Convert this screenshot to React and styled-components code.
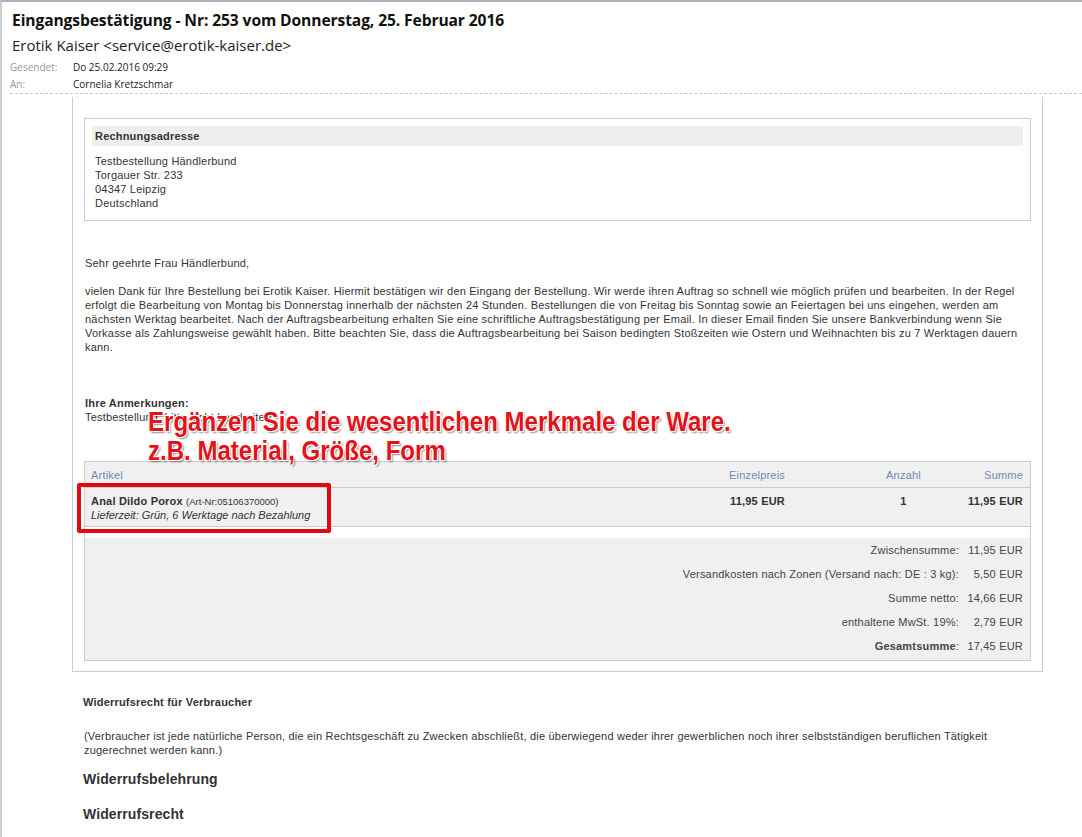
import React from "react";
import styled, { createGlobalStyle } from "styled-components";

const GlobalStyle = createGlobalStyle`
  html, body {
    margin: 0;
    padding: 0;
    background: #ffffff;
  }
  body {
    font-family: "Liberation Sans", Arial, sans-serif;
    color: #333333;
  }
`;

const Window = styled.div`
  width: 1082px;
  height: 837px;
  box-sizing: border-box;
  border-top: 2px solid #a9b1ba;
  border-left: 2px solid #c9ccd0;
  overflow: hidden;
  background: #ffffff;
`;

const Header = styled.header`
  margin-left: 8px;
  padding: 8px 0 1px 2px;
  border-bottom: 1px dashed #c8c8c8;
  font-family: "Open Sans", "Noto Sans", sans-serif;
`;

const Subject = styled.h1`
  margin: 0;
  font-size: 15.6px;
  line-height: 20px;
  font-weight: 700;
  color: #111111;
  letter-spacing: -0.1px;
`;

const From = styled.div`
  margin-top: 5px;
  font-size: 15px;
  line-height: 20px;
  color: #222222;
`;

const MetaList = styled.div`
  margin: 3px 0 0 -2px;
  display: grid;
  grid-template-columns: 63px 1fr;
  grid-auto-rows: 17px;
  align-items: center;
  font-size: 10px;
`;

const MetaLabel = styled.span`
  color: #9a9a9a;
`;

const MetaValue = styled.span`
  color: #1a1a1a;
`;

const Body = styled.div`
  padding: 3px 0 0 70px;
  font-size: 11px;
  letter-spacing: 0.2px;
  color: #333333;
`;

const Frame = styled.div`
  position: relative;
  width: 971px;
  box-sizing: border-box;
  padding: 21px 11px 10px 11px;
  border: 1px solid #cccccc;
  border-top: none;
`;

const AddressBox = styled.section`
  border: 1px solid #cccccc;
  padding: 7px 7px 10px 7px;
`;

const BoxTitle = styled.div`
  background: #eeeeee;
  height: 20px;
  line-height: 20px;
  padding-left: 3px;
  font-weight: 700;
`;

const AddressLines = styled.div`
  margin-top: 8px;
  padding-left: 3px;
  line-height: 14px;
`;

const Text = styled.p`
  margin: ${(p) => p.$top || 0}px 0 0 1px;
  line-height: 14px;
  white-space: nowrap;
`;

const Strong = styled.span`
  font-weight: 700;
`;

const OrderTable = styled.div`
  margin-top: 37px;
  border: 1px solid #cccccc;
`;

const Row = styled.div`
  display: grid;
  grid-template-columns: 1fr 187px 110px 71px;
  box-sizing: border-box;
  background: #f0f0f0;
  border-bottom: ${(p) => (p.$line ? "1px solid #cccccc" : "none")};
  height: ${(p) => p.$h}px;
  align-items: ${(p) => (p.$head ? "center" : "start")};
`;

const Cell = styled.div`
  padding: ${(p) => (p.$head ? "0" : "6px")} 7px 0 6px;
  text-align: ${(p) => p.$align || "left"};
  color: ${(p) => (p.$head ? "#7189b2" : "#333333")};
  font-weight: ${(p) => (p.$bold ? 700 : 400)};
  line-height: 14px;
`;

const PriceCell = styled(Cell)`
  padding-right: 64px;
`;

const ArtNr = styled.span`
  font-size: 9.5px;
  font-weight: 400;
  letter-spacing: 0;
`;

const Delivery = styled.div`
  font-style: italic;
  letter-spacing: 0;
  margin-top: -1px;
`;

const Spacer = styled.div`
  height: 11px;
  background: #ffffff;
`;

const Totals = styled.div`
  background: #f0f0f0;
  display: grid;
  grid-template-columns: 1fr 71px;
  grid-auto-rows: 24px;
  align-items: center;
  padding-bottom: 2px;
`;

const TotalLabel = styled.div`
  text-align: right;
  color: #444444;
`;

const TotalValue = styled.div`
  text-align: right;
  padding-right: 7px;
  color: #444444;
`;

const Annotation = styled.div`
  position: absolute;
  left: 75px;
  top: 311px;
  font-family: "Liberation Sans", Arial, sans-serif;
  font-weight: 700;
  font-size: 27px;
  line-height: 29px;
  letter-spacing: 0;
  color: #e3121b;
  white-space: nowrap;
  transform: scaleX(0.89);
  transform-origin: left top;
  text-shadow:
    1px 1px 0 #ffffff, -1px -1px 0 #ffffff, 1px -1px 0 #ffffff,
    -1px 1px 0 #ffffff, 2px 2px 2px rgba(0, 0, 0, 0.45);
`;

const Marker = styled.div`
  position: absolute;
  left: 4px;
  top: 386px;
  width: 254px;
  height: 50px;
  box-sizing: border-box;
  border: 4px solid #e2080f;
  border-radius: 2px;
`;

const Legal = styled.section`
  padding: 23px 0 0 11px;
`;

const LegalTitle = styled.div`
  font-weight: 700;
  line-height: 14px;
`;

const LegalHeading = styled.h2`
  margin: ${(p) => p.$top}px 0 0;
  font-size: 14px;
  line-height: 18px;
  font-weight: 700;
  letter-spacing: 0.1px;
  color: #333333;
`;

const totals = [
  ["Zwischensumme:", "11,95 EUR"],
  ["Versandkosten nach Zonen (Versand nach: DE : 3 kg):", "5,50 EUR"],
  ["Summe netto:", "14,66 EUR"],
  ["enthaltene MwSt. 19%:", "2,79 EUR"],
];

export default function App() {
  return (
    <>
      <GlobalStyle />
      <Window>
        <Header>
          <Subject>Eingangsbestätigung - Nr: 253 vom Donnerstag, 25. Februar 2016</Subject>
          <From>Erotik Kaiser &lt;service@erotik-kaiser.de&gt;</From>
          <MetaList>
            <MetaLabel>Gesendet:</MetaLabel>
            <MetaValue>Do 25.02.2016 09:29</MetaValue>
            <MetaLabel>An:</MetaLabel>
            <MetaValue>Cornelia Kretzschmar</MetaValue>
          </MetaList>
        </Header>

        <Body>
          <Frame>
            <AddressBox>
              <BoxTitle>Rechnungsadresse</BoxTitle>
              <AddressLines>
                Testbestellung Händlerbund
                <br />
                Torgauer Str. 233
                <br />
                04347 Leipzig
                <br />
                Deutschland
              </AddressLines>
            </AddressBox>

            <Text $top={35}>Sehr geehrte Frau Händlerbund,</Text>
            <Text $top={14}>
              vielen Dank für Ihre Bestellung bei Erotik Kaiser. Hiermit bestätigen wir den Eingang der Bestellung. Wir werde ihren Auftrag so schnell wie möglich prüfen und bearbeiten. In der Regel
              <br />
              erfolgt die Bearbeitung von Montag bis Donnerstag innerhalb der nächsten 24 Stunden. Bestellungen die von Freitag bis Sonntag sowie an Feiertagen bei uns eingehen, werden am
              <br />
              nächsten Werktag bearbeitet. Nach der Auftragsbearbeitung erhalten Sie eine schriftliche Auftragsbestätigung per Email. In dieser Email finden Sie unsere Bankverbindung wenn Sie
              <br />
              Vorkasse als Zahlungsweise gewählt haben. Bitte beachten Sie, dass die Auftragsbearbeitung bei Saison bedingten Stoßzeiten wie Ostern und Weihnachten bis zu 7 Werktagen dauern
              <br />
              kann.
            </Text>

            <Text $top={42}>
              <Strong>Ihre Anmerkungen:</Strong>
              <br />
              Testbestellung, bitte nicht bearbeiten
            </Text>

            <OrderTable>
              <Row $head $line $h={26}>
                <Cell $head>Artikel</Cell>
                <PriceCell $head $align="right">Einzelpreis</PriceCell>
                <Cell $head $align="center">Anzahl</Cell>
                <Cell $head $align="right">Summe</Cell>
              </Row>
              <Row $line $h={39}>
                <Cell>
                  <Strong>Anal Dildo Porox</Strong> <ArtNr>(Art-Nr:05106370000)</ArtNr>
                  <Delivery>Lieferzeit: Grün, 6 Werktage nach Bezahlung</Delivery>
                </Cell>
                <PriceCell $bold $align="right">11,95 EUR</PriceCell>
                <Cell $bold $align="center">1</Cell>
                <Cell $bold $align="right">11,95 EUR</Cell>
              </Row>
              <Spacer />
              <Totals>
                {totals.map(([label, value]) => (
                  <React.Fragment key={label}>
                    <TotalLabel>{label}</TotalLabel>
                    <TotalValue>{value}</TotalValue>
                  </React.Fragment>
                ))}
                <TotalLabel>
                  <Strong>Gesamtsumme</Strong>:
                </TotalLabel>
                <TotalValue>17,45 EUR</TotalValue>
              </Totals>
            </OrderTable>

            <Annotation>
              Ergänzen Sie die wesentlichen Merkmale der Ware.
              <br />
              z.B. Material, Größe, Form
            </Annotation>
            <Marker />
          </Frame>

          <Legal>
            <LegalTitle>Widerrufsrecht für Verbraucher</LegalTitle>
            <Text $top={20}>
              (Verbraucher ist jede natürliche Person, die ein Rechtsgeschäft zu Zwecken abschließt, die überwiegend weder ihrer gewerblichen noch ihrer selbstständigen beruflichen Tätigkeit
              <br />
              zugerechnet werden kann.)
            </Text>
            <LegalHeading $top={13}>Widerrufsbelehrung</LegalHeading>
            <LegalHeading $top={17}>Widerrufsrecht</LegalHeading>
          </Legal>
        </Body>
      </Window>
    </>
  );
}
